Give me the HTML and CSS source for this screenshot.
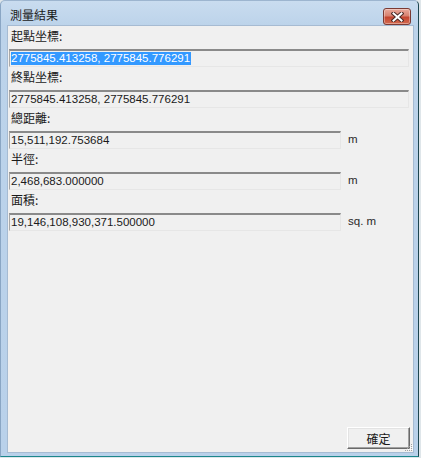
FILE: index.html
```html
<!DOCTYPE html>
<html lang="zh-Hant">
<head>
<meta charset="utf-8">
<title>測量結果</title>
<link rel="stylesheet" href="styles.css">
</head>
<body>
<div class="window">
  <div class="titlebar">
    <span class="title">測量結果</span>
    <button class="close" aria-label="關閉">
      <svg width="13" height="10" viewBox="0 0 13 10">
        <path d="M2.5 1.5 L10.5 8.5 M10.5 1.5 L2.5 8.5" stroke="#4a2a26" stroke-width="4" stroke-linecap="square" fill="none"/>
        <path d="M2.5 1.5 L10.5 8.5 M10.5 1.5 L2.5 8.5" stroke="#ffffff" stroke-width="2" stroke-linecap="square" fill="none"/>
      </svg>
    </button>
  </div>
  <div class="client">
    <div class="group">
      <div class="label">起點坐標:</div>
      <div class="field wide"><span class="sel">2775845.413258, 2775845.776291</span></div>
    </div>
    <div class="group">
      <div class="label">終點坐標:</div>
      <div class="field wide">2775845.413258, 2775845.776291</div>
    </div>
    <div class="group">
      <div class="label">總距離:</div>
      <div class="row">
        <div class="field short">15,511,192.753684</div>
        <span class="unit">m</span>
      </div>
    </div>
    <div class="group">
      <div class="label">半徑:</div>
      <div class="row">
        <div class="field short">2,468,683.000000</div>
        <span class="unit">m</span>
      </div>
    </div>
    <div class="group">
      <div class="label">面積:</div>
      <div class="row">
        <div class="field short">19,146,108,930,371.500000</div>
        <span class="unit">sq. m</span>
      </div>
    </div>
    <div class="spacer"></div>
    <div class="footer">
      <button class="ok">確定</button>
    </div>
    <svg class="grip" width="10" height="10" viewBox="0 0 10 10">
      <g fill="#a0a0a0">
        <rect x="8" y="2" width="1" height="1"/>
        <rect x="6" y="4" width="1" height="1"/><rect x="8" y="4" width="1" height="1"/>
        <rect x="4" y="6" width="1" height="1"/><rect x="6" y="6" width="1" height="1"/><rect x="8" y="6" width="1" height="1"/>
        <rect x="2" y="8" width="1" height="1"/><rect x="4" y="8" width="1" height="1"/><rect x="6" y="8" width="1" height="1"/><rect x="8" y="8" width="1" height="1"/>
      </g>
      <g fill="#ffffff">
        <rect x="9" y="3" width="1" height="1"/>
        <rect x="7" y="5" width="1" height="1"/><rect x="9" y="5" width="1" height="1"/>
        <rect x="5" y="7" width="1" height="1"/><rect x="7" y="7" width="1" height="1"/><rect x="9" y="7" width="1" height="1"/>
      </g>
    </svg>
  </div>
</div>
</body>
</html>
```

FILE: styles.css
```css
html, body {
  margin: 0;
  padding: 0;
}
body {
  width: 421px;
  height: 458px;
  background: #dfe6ea;
  font-family: "Liberation Sans", "Noto Sans CJK TC", sans-serif;
  overflow: hidden;
}
.window {
  box-sizing: border-box;
  width: 419px;
  height: 457px;
  background: linear-gradient(to bottom, #c9dcef 0px, #bcd3ea 25px, #b9d1ea 100%);
  border-left: 1px solid #8aa6c4;
  border-top: 1px solid #9db5cf;
  border-right: 1px solid #1e4650;
  border-bottom: 1px solid #1c878c;
  border-radius: 5px 5px 0 0;
  display: flex;
  flex-direction: column;
  padding: 0 4px 3px 6px;
}
.titlebar {
  height: 24px;
  display: flex;
  align-items: center;
  position: relative;
}
.title {
  font-family: "Noto Sans CJK TC", sans-serif;
  font-size: 12px;
  color: #1a1a1a;
  padding-left: 3px;
  padding-top: 2px;
}
.close {
  position: absolute;
  left: 376px;
  top: 7px;
  width: 28px;
  height: 17px;
  padding: 0;
  border: 1px solid #7b3a33;
  border-radius: 3px;
  background: linear-gradient(to bottom, #e9a99b 0%, #d88270 45%, #c4452f 55%, #d36a4f 100%);
  box-shadow: inset 0 0 0 1px rgba(255,255,255,0.35);
  display: flex;
  align-items: center;
  justify-content: center;
}
.client {
  flex: 1;
  position: relative;
  background: #f0f0f0;
  border: 1px solid #a6bbd2;
  display: flex;
  flex-direction: column;
  padding: 0 0 0 1px;
}
.group {
  display: flex;
  flex-direction: column;
}
.label {
  font-family: "Noto Sans CJK TC", sans-serif;
  font-size: 12px;
  line-height: 20px;
  height: 20px;
  color: #1a1a1a;
  padding-left: 2px;
}
.field {
  box-sizing: border-box;
  height: 18px;
  margin-top: 3px;
  background: #f0f0f0;
  border-top: 2px solid #8a8a8a;
  border-left: 1px solid #a8a8a8;
  border-right: 1px solid #e6e6e6;
  border-bottom: 1px solid #e6e6e6;
  font-size: 11.5px;
  line-height: 15px;
  color: #1a1a1a;
  padding-left: 1px;
  white-space: nowrap;
}
.wide {
  width: 400px;
}
.short {
  width: 332px;
}
.sel {
  background: #3399ff;
  color: #ffffff;
  padding: 0 1px 1px 0;
}
.row {
  display: flex;
  align-items: flex-start;
}
.unit {
  font-size: 11.5px;
  color: #2a2a2a;
  margin-left: 7px;
  margin-top: 5px;
}
.spacer {
  flex: 1;
}
.footer {
  display: flex;
  justify-content: flex-end;
  padding: 0 3px 3px 0;
}
.ok {
  box-sizing: border-box;
  width: 63px;
  height: 22px;
  padding: 0;
  background: #f0f0f0;
  border-top: 1px solid #ffffff;
  border-left: 1px solid #ffffff;
  border-right: 1px solid #696969;
  border-bottom: 1px solid #696969;
  box-shadow: inset -1px -1px 0 #a0a0a0, inset 1px 1px 0 #e3e3e3;
  font-family: "Noto Sans CJK TC", sans-serif;
  font-size: 12px;
  color: #1a1a1a;
}
.grip {
  position: absolute;
  right: 0;
  bottom: 0;
}
```
